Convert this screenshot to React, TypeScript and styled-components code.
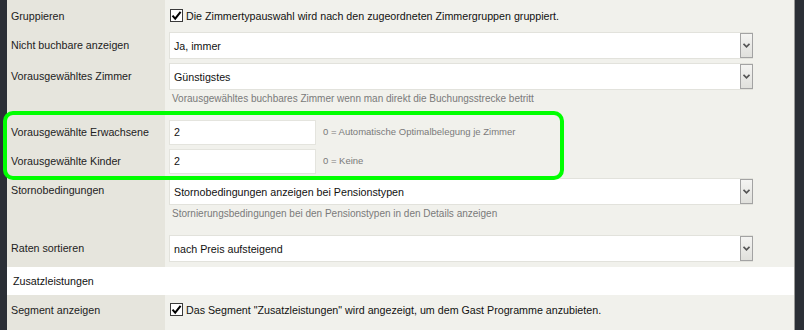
import React from "react";
import styled, { createGlobalStyle } from "styled-components";

const GlobalStyle = createGlobalStyle`
  html, body {
    margin: 0;
    padding: 0;
    background: #2b2f36;
  }
  body {
    font-family: "Liberation Sans", Arial, sans-serif;
    font-size: 10.7px;
    color: #1c1c1c;
  }
`;

const Frame = styled.div`
  width: 804px;
  height: 330px;
  overflow: hidden;
  display: flex;
  background: #2b2f36;
`;

const Panel = styled.div`
  margin-left: 7px;
  width: 787px;
  border-right: 1px solid #9a9a98;
  background: linear-gradient(to right, #e6e5dd 0, #e6e5dd 158px, #f1f1ec 158px);
  display: flex;
  flex-direction: column;
`;

const Row = styled.div<{ $pad?: number }>`
  display: flex;
  align-items: flex-start;
  padding: ${({ $pad }) => $pad ?? 2}px 0 2px;
`;

const Label = styled.div<{ $h?: number }>`
  width: 158px;
  flex-shrink: 0;
  box-sizing: border-box;
  padding-left: 4px;
  white-space: nowrap;
  line-height: ${({ $h }) => $h ?? 27}px;
  color: #222;
`;

const Value = styled.div`
  flex: 1;
  padding-left: 4px;
  display: flex;
  flex-direction: column;
`;

const Inline = styled.div`
  display: flex;
  align-items: center;
`;

const SelectBox = styled.div`
  width: 584px;
  height: 27px;
  box-sizing: border-box;
  background: #fff;
  border: 1px solid #e2e2dc;
  display: flex;
  align-items: center;
`;

const SelectText = styled.span`
  flex: 1;
  padding-left: 4px;
  color: #111;
`;

const SelectButton = styled.span`
  width: 13px;
  height: 25px;
  box-sizing: border-box;
  border: 1px solid #a3a3a3;
  background: linear-gradient(#f4f4f2, #e0e0dc);
  display: flex;
  align-items: center;
  justify-content: center;
  margin-right: -1px;
`;

const TextInput = styled.div`
  width: 147px;
  height: 25px;
  box-sizing: border-box;
  background: #fff;
  border: 1px solid #e4e4de;
  padding-left: 4px;
  line-height: 23px;
  color: #111;
  flex-shrink: 0;
`;

const Hint = styled.div<{ $side?: boolean }>`
  color: #7a7a7a;
  font-size: ${({ $side }) => ($side ? 9.5 : 10)}px;
  margin: ${({ $side }) => ($side ? "-3px 0 0 7px" : "2px 0 11px 3px")};
  line-height: 13px;
  white-space: nowrap;
`;

const Check = styled.span`
  width: 13px;
  height: 13px;
  box-sizing: border-box;
  border: 1px solid #3a3a3a;
  background: #fff;
  margin: 0 3px 0 1px;
  display: inline-flex;
  align-items: center;
  justify-content: center;
  flex-shrink: 0;
`;

const CheckText = styled.span`
  color: #111;
  white-space: nowrap;
`;

const Highlight = styled.div`
  position: relative;
  &::after {
    content: "";
    position: absolute;
    left: -4px;
    top: -7px;
    width: 561px;
    bottom: -4px;
    border: 4px solid #00ff00;
    border-radius: 10px;
    box-sizing: border-box;
    pointer-events: none;
  }
`;

const Section = styled.div`
  background: #fff;
  height: 28px;
  line-height: 28px;
  padding-left: 6px;
  margin-top: 3px;
  color: #111;
`;

const Chevron = () => (
  <svg width="7" height="5" viewBox="0 0 7 5">
    <path d="M0.5 0.8 L3.5 3.8 L6.5 0.8" fill="none" stroke="#555" strokeWidth="1.7" />
  </svg>
);

const Tick = () => (
  <svg width="11" height="11" viewBox="0 0 11 11">
    <path d="M1.5 5.6 L4.2 8.6 L9.6 1.8" fill="none" stroke="#000" strokeWidth="2" />
  </svg>
);

const Select: React.FC<{ value: string }> = ({ value }) => (
  <SelectBox>
    <SelectText>{value}</SelectText>
    <SelectButton>
      <Chevron />
    </SelectButton>
  </SelectBox>
);

const CheckRow: React.FC<{ label: string; text: string; pad: number }> = ({ label, text, pad }) => (
  <Row $pad={pad}>
    <Label $h={14}>{label}</Label>
    <Value>
      <Inline>
        <Check>
          <Tick />
        </Check>
        <CheckText>{text}</CheckText>
      </Inline>
    </Value>
  </Row>
);

export default function App() {
  return (
    <>
      <GlobalStyle />
      <Frame>
        <Panel>
          <CheckRow
            pad={9}
            label="Gruppieren"
            text="Die Zimmertypauswahl wird nach den zugeordneten Zimmergruppen gruppiert."
          />
          <Row $pad={7}>
            <Label>Nicht buchbare anzeigen</Label>
            <Value>
              <Select value="Ja, immer" />
            </Value>
          </Row>
          <Row>
            <Label>Vorausgewähltes Zimmer</Label>
            <Value>
              <Select value="Günstigstes" />
              <Hint>Vorausgewähltes buchbares Zimmer wenn man direkt die Buchungsstrecke betritt</Hint>
            </Value>
          </Row>
          <Highlight>
            <Row>
              <Label $h={25}>Vorausgewählte Erwachsene</Label>
              <Value>
                <Inline>
                  <TextInput>2</TextInput>
                  <Hint $side>0 = Automatische Optimalbelegung je Zimmer</Hint>
                </Inline>
              </Value>
            </Row>
            <Row>
              <Label $h={25}>Vorausgewählte Kinder</Label>
              <Value>
                <Inline>
                  <TextInput>2</TextInput>
                  <Hint $side>0 = Keine</Hint>
                </Inline>
              </Value>
            </Row>
          </Highlight>
          <Row>
            <Label $h={24}>Stornobedingungen</Label>
            <Value>
              <Select value="Stornobedingungen anzeigen bei Pensionstypen" />
              <Hint>Stornierungsbedingungen bei den Pensionstypen in den Details anzeigen</Hint>
            </Value>
          </Row>
          <Row>
            <Label>Raten sortieren</Label>
            <Value>
              <Select value="nach Preis aufsteigend" />
            </Value>
          </Row>
          <Section>Zusatzleistungen</Section>
          <CheckRow
            pad={8}
            label="Segment anzeigen"
            text={'Das Segment "Zusatzleistungen" wird angezeigt, um dem Gast Programme anzubieten.'}
          />
        </Panel>
      </Frame>
    </>
  );
}
